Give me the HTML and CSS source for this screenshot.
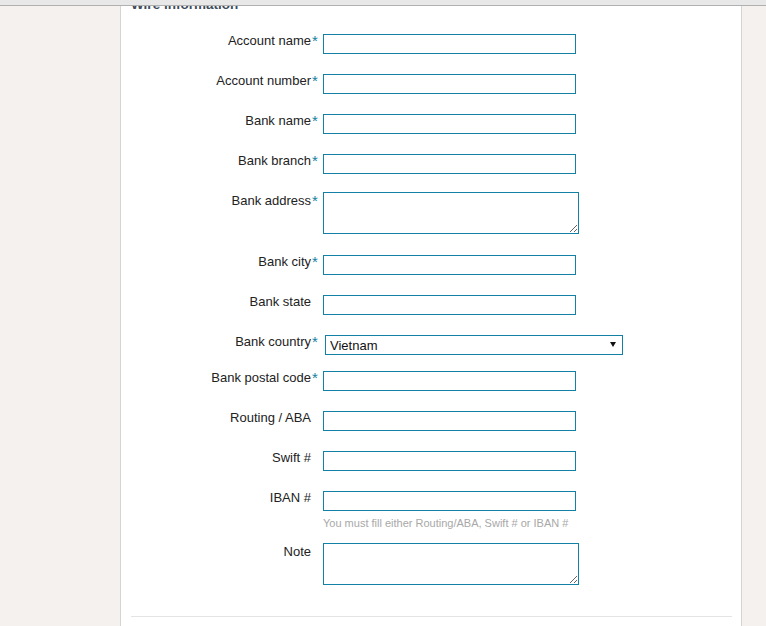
FILE: index.html
```html
<!DOCTYPE html>
<html lang="en">
<head>
<meta charset="utf-8">
<title>Wire information</title>
<link rel="stylesheet" href="styles.css">
</head>
<body>
<div class="topbar"></div>
<div class="panel">
  <h2 class="section-title">Wire information</h2>
  <form class="wire-form">
    <div class="row">
      <label class="lbl">Account name</label><span class="req">*</span>
      <input class="field" type="text">
    </div>
    <div class="row">
      <label class="lbl">Account number</label><span class="req">*</span>
      <input class="field" type="text">
    </div>
    <div class="row">
      <label class="lbl">Bank name</label><span class="req">*</span>
      <input class="field" type="text">
    </div>
    <div class="row row-before-area">
      <label class="lbl">Bank branch</label><span class="req">*</span>
      <input class="field" type="text">
    </div>
    <div class="row row-area">
      <label class="lbl lbl-area">Bank address</label><span class="req req-area">*</span>
      <textarea class="area"></textarea>
    </div>
    <div class="row">
      <label class="lbl">Bank city</label><span class="req">*</span>
      <input class="field" type="text">
    </div>
    <div class="row">
      <label class="lbl">Bank state</label><span class="req"></span>
      <input class="field" type="text">
    </div>
    <div class="row row-select">
      <label class="lbl">Bank country</label><span class="req">*</span>
      <div class="select-wrap">
        <select class="select">
          <option>Vietnam</option>
        </select>
      </div>
    </div>
    <div class="row">
      <label class="lbl">Bank postal code</label><span class="req">*</span>
      <input class="field" type="text">
    </div>
    <div class="row">
      <label class="lbl">Routing / ABA</label><span class="req"></span>
      <input class="field" type="text">
    </div>
    <div class="row">
      <label class="lbl">Swift #</label><span class="req"></span>
      <input class="field" type="text">
    </div>
    <div class="row row-hint">
      <label class="lbl">IBAN #</label><span class="req"></span>
      <div class="field-group">
        <input class="field" type="text">
        <div class="hint">You must fill either Routing/ABA, Swift # or IBAN #</div>
      </div>
    </div>
    <div class="row row-last">
      <label class="lbl lbl-area">Note</label><span class="req"></span>
      <textarea class="area"></textarea>
    </div>
  </form>
  <hr class="divider">
</div>
</body>
</html>
```

FILE: styles.css
```css
html, body {
  margin: 0;
  padding: 0;
}

body {
  background: #f4f1ef;
  font-family: "Liberation Sans", Arial, sans-serif;
  color: #222;
  overflow: hidden;
}

.topbar {
  position: fixed;
  top: 0;
  left: 0;
  right: 0;
  height: 5px;
  background: #e8e8e8;
  border-bottom: 1px solid #b0b0b0;
  z-index: 10;
}

.panel {
  display: flow-root;
  margin-left: 120px;
  width: 622px;
  box-sizing: border-box;
  min-height: 100vh;
  background: #fff;
  border-left: 1px solid #d6d3d1;
  border-right: 1px solid #d6d3d1;
  padding: 0 0 0 10px;
}

.section-title {
  margin: -3px 0 0 0;
  font-size: 13.5px;
  line-height: 16px;
  font-weight: bold;
  color: #3d4a5a;
}

.wire-form {
  margin-top: 21px;
}

.row {
  display: flex;
  align-items: flex-start;
  margin-bottom: 20px;
}

.row-before-area {
  margin-bottom: 18px;
}

.row-area {
  margin-bottom: 21px;
}

.row-select {
  margin-bottom: 16px;
}

.row-hint {
  margin-bottom: 13px;
}

.row-last {
  margin-bottom: 0;
}

.lbl {
  width: 180px;
  flex: none;
  text-align: right;
  font-size: 13px;
  line-height: 13px;
  color: #222;
}

.lbl-area {
  margin-top: 2px;
}

.req {
  width: 8px;
  flex: none;
  box-sizing: border-box;
  padding-left: 1px;
  font-size: 15px;
  line-height: 13px;
  color: #13809f;
}

.req-area {
  margin-top: 2px;
}

.field {
  display: block;
  margin: 0 0 0 4px;
  width: 253px;
  height: 20px;
  box-sizing: border-box;
  border: 1px solid #1380a5;
  border-radius: 0;
  padding: 0 3px;
  background: #fff;
  font-family: "Liberation Sans", Arial, sans-serif;
  font-size: 13px;
  outline: none;
}

.field-group {
  display: flex;
  flex-direction: column;
}

.hint {
  margin: 6px 0 0 4px;
  font-size: 11px;
  line-height: 13px;
  color: #a8a8a8;
  white-space: nowrap;
}

.area {
  display: block;
  margin: 0 0 0 4px;
  width: 256px;
  height: 42px;
  box-sizing: border-box;
  border: 1px solid #1380a5;
  border-radius: 0;
  padding: 2px;
  background: #fff;
  font-family: "Liberation Sans", Arial, sans-serif;
  font-size: 13px;
  outline: none;
}

.select-wrap {
  position: relative;
  margin-left: 6px;
  width: 298px;
  height: 20px;
}

.select {
  display: block;
  width: 298px;
  height: 20px;
  box-sizing: border-box;
  margin: 0;
  border: 1px solid #1380a5;
  border-radius: 0;
  padding: 0 0 0 4px;
  background: #fff;
  font-family: "Liberation Sans", Arial, sans-serif;
  font-size: 13px;
  color: #111;
  -webkit-appearance: none;
  appearance: none;
  outline: none;
}

.select-wrap::after {
  content: "";
  position: absolute;
  right: 7px;
  top: 7px;
  width: 0;
  height: 0;
  border-left: 3px solid transparent;
  border-right: 3px solid transparent;
  border-top: 5px solid #111;
  pointer-events: none;
}

.divider {
  margin: 31px 9px 0 0;
  height: 1px;
  border: 0;
  background: #e4e4e4;
}
```
